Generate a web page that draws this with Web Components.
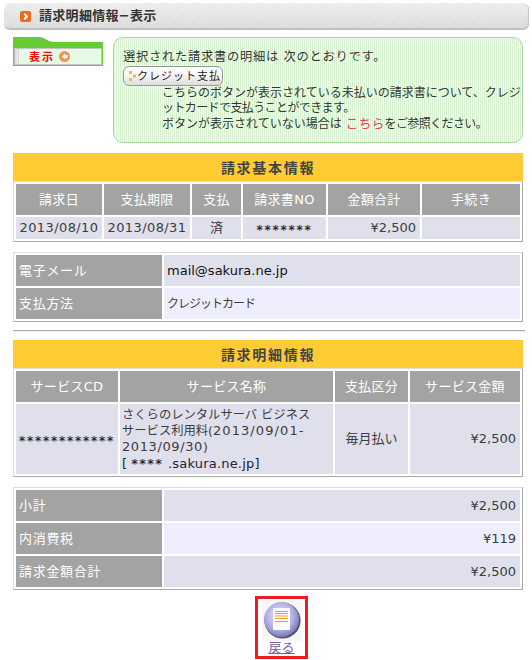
<!DOCTYPE html>
<html lang="ja">
<head>
<meta charset="utf-8">
<title>請求明細情報</title>
<style>
	html, body { margin: 0; background: #fff; }
	body {
		width: 532px;
		height: 660px;
		overflow: hidden;
		font: 13px/16px "DejaVu Sans", "Noto Sans CJK JP", sans-serif;
		color: #333;
	}
	.date { letter-spacing: .4px; }
	.long { font-size: 12.3px; margin-left: -1px; }
	.long b { font-weight: normal; font-size: 13px; letter-spacing: .6px; }
	.long b.wide { letter-spacing: 1.1px; }
	.domain { color: #223; font-size: 13px; letter-spacing: .2px; }
	.pay { font-size: 12px; letter-spacing: -1px; }
	.line1 { font-size: 12.3px; letter-spacing: .7px; }
	.note { padding-left: 39px; white-space: nowrap; font-size: 12px; }
	.tight { letter-spacing: -.6px; }
	.link { color: #f0386b; font-size: 13px; }
</style>
</head>
<body>
<invoice-page>
	<page-header>請求明細情報−表示</page-header>
	<intro-row>
		<side-tab slot="tab">表示</side-tab>
		<info-box slot="info">
			<div class="line1">選択された請求書の明細は 次のとおりです。</div>
			<push-button>クレジット支払</push-button>
			<div class="note">こちらのボタンが表示されている未払いの請求書について、クレジ<br><span class="tight">ットカードで支払うことができます。</span><br>ボタンが表示されていない場合は <span class="link">こちら</span><span class="tight">をご参照ください。</span></div>
		</info-box>
	</intro-row>

	<section-title style="margin-top:10px">請求基本情報</section-title>
	<data-table columns="86px 86px 49px 83px 92px 98px" rows="31px 22px">
		<data-cell kind="head">請求日</data-cell>
		<data-cell kind="head">支払期限</data-cell>
		<data-cell kind="head">支払</data-cell>
		<data-cell kind="head">請求書NO</data-cell>
		<data-cell kind="head">金額合計</data-cell>
		<data-cell kind="head">手続き</data-cell>
		<data-cell align="center"><span class="date">2013/08/10</span></data-cell>
		<data-cell align="center"><span class="date">2013/08/31</span></data-cell>
		<data-cell align="center">済</data-cell>
		<data-cell align="center"><masked-text>*******</masked-text></data-cell>
		<data-cell align="right">¥2,500</data-cell>
		<data-cell></data-cell>
	</data-table>

	<data-table style="margin-top:10px" columns="146px 356px" rows="31px 31px">
		<data-cell kind="label">電子メール</data-cell>
		<data-cell><span style="color:#111">mail@sakura.ne.jp</span></data-cell>
		<data-cell kind="label">支払方法</data-cell>
		<data-cell tone="light"><span class="pay">クレジットカード</span></data-cell>
	</data-table>

	<page-rule></page-rule>

	<section-title>請求明細情報</section-title>
	<data-table columns="102px 213px 73px 110px" rows="31px 70px">
		<data-cell kind="head">サービスCD</data-cell>
		<data-cell kind="head">サービス名称</data-cell>
		<data-cell kind="head">支払区分</data-cell>
		<data-cell kind="head">サービス金額</data-cell>
		<data-cell align="center"><masked-text>************</masked-text></data-cell>
		<data-cell>
			<div class="long">さくらのレンタルサーバ ビジネス<br>サービス利用料(<b class="wide">2013/09/01-</b><br><b>2013/09/30</b>)<br><span class="domain">[ <masked-text>****</masked-text> .sakura.ne.jp]</span></div>
		</data-cell>
		<data-cell align="center">毎月払い</data-cell>
		<data-cell align="right">¥2,500</data-cell>
	</data-table>

	<data-table style="margin-top:10px" columns="146px 356px" rows="31px 31px 31px">
		<data-cell kind="label">小計</data-cell>
		<data-cell align="right">¥2,500</data-cell>
		<data-cell kind="label">内消費税</data-cell>
		<data-cell align="right" tone="light">¥119</data-cell>
		<data-cell kind="label">請求金額合計</data-cell>
		<data-cell align="right">¥2,500</data-cell>
	</data-table>

	<back-button>戻る</back-button>
</invoice-page>

<script>
	// ページ全体の枠
	class InvoicePage extends HTMLElement {
		constructor() {
			super();
			this.attachShadow({ mode: 'open' });
			this.shadowRoot.innerHTML = /* html */ `
			<style>
				:host {
					display: flex;
					flex-direction: column;
					padding: 3px 9px 0 13px;
				}
			</style>
			<slot></slot>`;
		}
	}

	class PageHeader extends HTMLElement {
		constructor() {
			super();
			this.attachShadow({ mode: 'open' });
			this.shadowRoot.innerHTML = /* html */ `
			<style>
				:host {
					display: flex;
					align-items: center;
					gap: 8px;
					box-sizing: border-box;
					height: 27px;
					margin: 0 -6px 0 -9px;
					padding-left: 16px;
					border-radius: 6px;
					border-bottom: 1px solid #bbb;
					box-shadow: inset -1px -1px 1px #c4c4c4;
					background: repeating-linear-gradient(135deg, rgba(255,255,255,.22) 0 1px, transparent 1px 2px),
						linear-gradient(#ececec, #d8d8d8);
					font-weight: bold;
					font-size: 13px;
					letter-spacing: .3px;
					color: #333;
				}
				svg { flex: none; }
			</style>
			<svg width="11" height="11" viewBox="0 0 11 11">
				<rect width="11" height="11" rx="2" fill="#f26a12"/>
				<path d="M4 2.5h2v1h1v1h1v2H7v1H6v1H4v-2h1v-2H4z" fill="#fff"/>
			</svg>
			<span><slot></slot></span>`;
		}
	}

	class IntroRow extends HTMLElement {
		constructor() {
			super();
			this.attachShadow({ mode: 'open' });
			this.shadowRoot.innerHTML = /* html */ `
			<style>
				:host {
					display: flex;
					align-items: flex-start;
					gap: 10px;
					margin-top: 7px;
				}
			</style>
			<slot name="tab"></slot>
			<slot name="info"></slot>`;
		}
	}

	class SideTab extends HTMLElement {
		constructor() {
			super();
			this.attachShadow({ mode: 'open' });
			this.shadowRoot.innerHTML = /* html */ `
			<style>
				:host {
					display: block;
					flex: none;
					width: 90px;
				}
				svg { display: block; }
				.body {
					display: flex;
					align-items: center;
					gap: 4px;
					box-sizing: border-box;
					height: 17px;
					margin: 1px 1px 1px;
					padding-left: 14px;
					border: 1px solid #c4c4c4;
					outline: 1px solid #66cc33;
					background: linear-gradient(90deg, #d0d0dc, #f4f4f8 3px, #bbb 4px, #e6fbe3 4px);
					color: #f00;
					font: bold 11px/1 "Noto Sans CJK JP", sans-serif;
					letter-spacing: 2px;
				}
			</style>
			<svg width="90" height="10" viewBox="0 0 90 10">
				<path d="M0 0H26C32 0 34 5 42 5H90V10H0z" fill="#66cc33"/>
			</svg>
			<div class="body">
				<span><slot></slot></span>
				<svg width="11" height="11" viewBox="0 0 11 11">
					<circle cx="5.500" cy="5.500" r="5.500" fill="#f59355"/>
					<path d="M6 2.500 3 5.500l3 3V7h2.500V4H6z" fill="#fff"/>
				</svg>
			</div>`;
		}
	}

	class InfoBox extends HTMLElement {
		constructor() {
			super();
			this.attachShadow({ mode: 'open' });
			this.shadowRoot.innerHTML = /* html */ `
			<style>
				:host {
					display: block;
					box-sizing: border-box;
					width: 410px;
					height: 106px;
					padding: 12px 0 0 9px;
					border: 1px solid #a8d8a0;
					border-radius: 10px;
					background: repeating-linear-gradient(90deg, #d6f0d0 0 1px, #fff 1px 2px);
					color: #333;
					font-size: 12px;
					line-height: 15px;
				}
			</style>
			<slot></slot>`;
		}
	}

	class PushButton extends HTMLElement {
		constructor() {
			super();
			this.attachShadow({ mode: 'open' });
			this.shadowRoot.innerHTML = /* html */ `
			<style>
				:host {
					display: flex;
					align-items: center;
					gap: 1px;
					box-sizing: border-box;
					width: 100px;
					height: 20px;
					margin: 1px 0 0;
					padding-left: 5px;
					border: 1px solid #999;
					border-radius: 6px;
					background: linear-gradient(#fafafa 40%, #ddd);
					color: #222;
					font-size: 11px;
					letter-spacing: 1px;
					white-space: nowrap;
				}
				svg { flex: none; }
			</style>
			<svg width="7" height="10" viewBox="0 0 7 10" fill="#ffb347">
				<rect width="3" height="3"/>
				<rect y="7" width="3" height="3"/>
				<rect x="4" y="3.500" width="3" height="3"/>
			</svg>
			<span><slot></slot></span>`;
		}
	}

	class SectionTitle extends HTMLElement {
		constructor() {
			super();
			this.attachShadow({ mode: 'open' });
			this.shadowRoot.innerHTML = /* html */ `
			<style>
				:host {
					display: block;
					height: 28px;
					background: #ffcc33;
					color: #444;
					font: bold 14px/28px "Noto Sans CJK JP", sans-serif;
					letter-spacing: 1.7px;
					text-align: center;
				}
			</style>
			<slot></slot>`;
		}
	}

	// 表本体：列と行は属性で受け取る
	class DataTable extends HTMLElement {
		constructor() {
			super();
			this.attachShadow({ mode: 'open' });
			this.shadowRoot.innerHTML = /* html */ `
			<style>
				:host {
					display: grid;
					gap: 2px;
					box-sizing: border-box;
					width: 510px;
					padding: 2px;
					border: 1px solid #ddd;
					border-right-color: #aaa;
					border-bottom-color: #aaa;
				}
			</style>
			<slot></slot>`;
		}

		connectedCallback() {
			this.style.gridTemplateColumns = this.getAttribute('columns');
			this.style.gridTemplateRows = this.getAttribute('rows');
		}
	}

	class DataCell extends HTMLElement {
		constructor() {
			super();
			this.attachShadow({ mode: 'open' });
			this.shadowRoot.innerHTML = /* html */ `
			<style>
				:host {
					display: flex;
					align-items: center;
					min-width: 0;
					padding: 0 3px;
					background: #e0e0ec;
					color: #3c3c3c;
					font-size: 13px;
					line-height: 16px;
					white-space: nowrap;
				}
				:host([tone="light"]) { background: #eeeeff; }
				:host([align="center"]) { justify-content: center; }
				:host([align="right"]) { justify-content: flex-end; padding-right: 4px; }
				:host([kind="head"]) {
					justify-content: center;
					background: #a3a3a3;
					color: #fff;
					letter-spacing: .3px;
				}
				:host([kind="label"]) {
					background: #a3a3a3;
					color: #fff;
					letter-spacing: .7px;
				}
			</style>
			<slot></slot>`;
		}
	}

	// 伏字のアスタリスク
	class MaskedText extends HTMLElement {
		constructor() {
			super();
			this.attachShadow({ mode: 'open' });
			this.shadowRoot.innerHTML = /* html */ `
			<style>
				:host {
					display: inline-block;
					padding-top: 3px;
					color: #0a1020;
					font: 12px/12px "DejaVu Sans", sans-serif;
					letter-spacing: 2px;
					text-shadow: -1px 0 0 rgba(224,138,32,.6), 1px 0 0 rgba(40,100,180,.6);
				}
			</style>
			<slot></slot>`;
		}
	}

	class PageRule extends HTMLElement {
		constructor() {
			super();
			this.attachShadow({ mode: 'open' });
			this.shadowRoot.innerHTML = /* html */ `
			<style>
				:host {
					display: block;
					margin: 8px -2px 8px 0;
					border-top: 1px solid #aaa;
					border-bottom: 1px solid #eee;
				}
			</style>`;
		}
	}

	class BackButton extends HTMLElement {
		constructor() {
			super();
			this.attachShadow({ mode: 'open' });
			this.shadowRoot.innerHTML = /* html */ `
			<style>
				:host {
					display: flex;
					flex-direction: column;
					align-items: center;
					box-sizing: border-box;
					width: 53px;
					height: 63px;
					margin: 6px 0 0 242px;
					padding-top: 2px;
					overflow: hidden;
					border: 3px solid #ed1c24;
					color: #7a5ea8;
					font-size: 13px;
					line-height: 16px;
				}
				svg { display: block; flex: none; }
				a { color: inherit; text-decoration: underline; margin-top: -1px; }
			</style>
			<svg width="40" height="40" viewBox="0 0 40 40">
				<defs>
					<radialGradient id="ball" cx=".45" cy=".4" r=".6">
						<stop offset="0" stop-color="#e8e8fa"/>
						<stop offset=".65" stop-color="#b0b0e4"/>
						<stop offset="1" stop-color="#7a7ac0"/>
					</radialGradient>
				</defs>
				<rect width="40" height="40" fill="#f7f7f9"/>
				<circle cx="20.500" cy="19.500" r="18" fill="#555"/>
				<circle cx="19.500" cy="18.500" r="17.500" fill="url(#ball)"/>
				<rect x="11" y="7" width="17" height="22" fill="#fafafa"/>
				<path d="M13 10.500h13M13 12.500h13M13 15h13M13 17.500h13M13 20.500h13" stroke="#f39a1e"/>
			</svg>
			<a href="#"><slot></slot></a>`;
		}
	}

	customElements.define('invoice-page', InvoicePage);
	customElements.define('page-header', PageHeader);
	customElements.define('intro-row', IntroRow);
	customElements.define('side-tab', SideTab);
	customElements.define('info-box', InfoBox);
	customElements.define('push-button', PushButton);
	customElements.define('section-title', SectionTitle);
	customElements.define('data-table', DataTable);
	customElements.define('data-cell', DataCell);
	customElements.define('masked-text', MaskedText);
	customElements.define('page-rule', PageRule);
	customElements.define('back-button', BackButton);
</script>
</body>
</html>
